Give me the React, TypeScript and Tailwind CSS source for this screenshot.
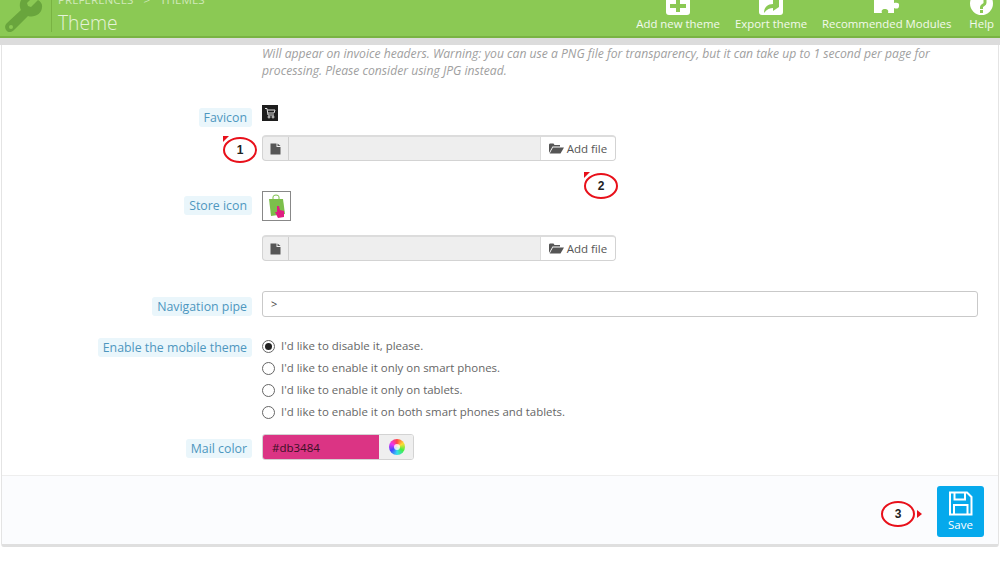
import React from "react";

function Label({ children, top = "" }: { children: React.ReactNode; top?: string }) {
  return (
    <div className={`w-[250px] shrink-0 flex justify-end ${top}`}>
      <span className="bg-[#eaf6fb] rounded-[3px] px-[5px] h-[19px] leading-[19px] text-[12.35px] text-[#4e97bf] whitespace-nowrap">{children}</span>
    </div>
  );
}

function FileIcon() {
  return (
    <svg width="11" height="12" viewBox="0 0 11 12"><path d="M0.5 0.5H6.5V4H10.5V11.5H0.5Z" fill="#555" /><path d="M7.5 0.5L10.5 3H7.5Z" fill="#555" /></svg>
  );
}

function FolderIcon() {
  return (
    <svg width="15" height="11" viewBox="0 0 15 11"><path d="M0 10V1.5L0.8 0.5H4.5L5.5 2H11V3.5H3.5L0 10Z" fill="#555" /><path d="M3.9 4.5H15L11.5 10.5H0.7Z" fill="#555" /></svg>
  );
}

function FileInput() {
  return (
    <div className="flex w-[354px] h-[26px] rounded-[4px] border border-[#d3d3d3] border-t-2 border-t-[#dcdcdc] bg-[#eeeeee] overflow-hidden">
      <div className="w-[26px] shrink-0 flex items-center justify-center border-r border-[#cfcfcf]"><FileIcon /></div>
      <div className="flex-1" />
      <div className="w-[75px] shrink-0 bg-white border-l border-[#dcdcdc] flex items-center justify-center gap-[3px] text-[11.5px] text-[#555]">
        <FolderIcon />
        <span>Add file</span>
      </div>
    </div>
  );
}

function Radio({ checked, children }: { checked?: boolean; children: React.ReactNode }) {
  return (
    <div className="h-[22px] flex items-center">
      <span className="w-[13px] h-[13px] rounded-full border border-[#666] bg-white flex items-center justify-center shrink-0">
        {checked && <span className="w-[7px] h-[7px] rounded-full bg-[#222]" />}
      </span>
      <span className="ml-[6px] text-[11.45px] text-[#666]">{children}</span>
    </div>
  );
}

function Callout({ n, cls, arrow }: { n: string; cls: string; arrow?: boolean }) {
  return (
    <div className={`absolute w-[34px] h-[26px] rounded-[50%] border-2 border-[#e8101a] bg-white flex items-center justify-center text-[12px] font-bold text-[#222] ${cls}`} style={{ fontFamily: "'Liberation Sans', sans-serif" }}>
      {!arrow && <span className="absolute left-[-2px] top-[-3px] w-0 h-0 border-t-[6px] border-t-[#e8101a] border-r-[6px] border-r-transparent" />}
      {n}
      {arrow && <span className="absolute right-[-9px] top-[7px] w-0 h-0 border-y-[4px] border-y-transparent border-l-[5px] border-l-[#e8101a]" />}
    </div>
  );
}

function HeadAction({ label, icon, cls = "" }: { label: string; icon: React.ReactNode; cls?: string }) {
  return (
    <div className={`flex flex-col items-center ${cls}`}>
      <div className="h-[15px] flex items-end overflow-hidden">{icon}</div>
      <span className="text-[11.4px] leading-[16px] mt-[1px] text-white/90 whitespace-nowrap">{label}</span>
    </div>
  );
}

export default function App() {
  return (
    <div className="relative w-[1000px] h-[563px] overflow-hidden bg-white" style={{ fontFamily: "'Open Sans', sans-serif" }}>
      <header className="h-[38px] bg-[#8bc954] border-b-2 border-[#79b343] flex items-stretch overflow-hidden">
        <div className="w-[52px] shrink-0 border-r border-[#79b343] h-[32px] relative overflow-hidden">
          <svg className="absolute left-[4px] top-[-6px]" width="40" height="40" viewBox="0 0 40 40">
            <path d="M34 6 L27 13 L24 12 L23 9 L30 2 C24 0 17 3 16 9 C15.500 12 16 14 17 16 L3 29 C0 32 1 35 3 37 C5 39 8 38 10 36 L24 22 C30 24 38 20 38 13 C38.500 10 37 8 34 6 Z" fill="#69a53d" />
            <circle cx="7" cy="33" r="2" fill="#8bc954" />
          </svg>
        </div>
        <div className="ml-[6px] w-[300px] flex flex-col">
          <div className="h-[12px] mt-[-8px] text-[11.6px] leading-[15px] text-white/60 flex gap-[10px] whitespace-nowrap">
            <span>PREFERENCES</span><span>&gt;</span><span>THEMES</span>
          </div>
          <div className="text-[19.3px] leading-[26px] mt-[6px] font-light text-[#e6f3d8]">Theme</div>
        </div>
        <nav className="ml-auto mr-[6px] flex gap-[15px] items-start">
          <HeadAction label="Add new theme" icon={
            <svg width="24" height="15" viewBox="0 0 24 15"><path d="M0 0H24V12Q24 15 21 15H3Q0 15 0 12Z" fill="#fff" /><path d="M10 0H14V4H20V8H14V12H10V8H4V4H10Z" fill="#8bc954" /></svg>} />
          <HeadAction label="Export theme" icon={
            <svg width="24" height="15" viewBox="0 0 24 15"><path d="M0 0H24V12Q24 15 21 15H3Q0 15 0 12Z" fill="#fff" /><path d="M5 13C5 7 9 4 14 4V0H20V7L14 11V8C11 8 8 9 5 13Z" fill="#8bc954" /></svg>} />
          <HeadAction label="Recommended Modules" icon={
            <svg width="26" height="15" viewBox="0 0 26 15"><path d="M0 0H20V3C23 2 26 3 25 6C25 9 22 9 20 8V13H14C15 10 13 9 11 9C8 9 7 11 8 13H0Z" fill="#fff" /></svg>} />
          <HeadAction cls="ml-[3px]" label="Help" icon={
            <svg width="23" height="15" viewBox="0 0 23 15"><circle cx="11.500" cy="3.500" r="11.500" fill="#fff" /><path d="M15 -1V3C15 5 12 5 11.500 7V9" fill="none" stroke="#8bc954" strokeWidth="3" /><rect x="10" y="10" width="3" height="3" fill="#8bc954" /></svg>} />
        </nav>
      </header>
      <div className="h-[7px] bg-[#dcdcdc]" />
      <main className="mx-[1px] h-[502px] border-x border-b-[3px] border-x-[#e4e4e4] border-b-[#dfdfdf] rounded-b-[3px] flex flex-col bg-white">
        <div className="pl-[260px] pr-[60px] text-[12.15px] leading-[17px] italic text-[#a0a0a0]">
          Will appear on invoice headers. Warning: you can use a PNG file for transparency, but it can take up to 1 second per page for processing. Please consider using JPG instead.
        </div>
        <section className="flex mt-[26px]">
          <Label top="mt-[3px]">Favicon</Label>
          <div className="ml-[10px]">
            <div className="w-[16px] h-[16px] bg-[#1d1d1d] flex items-center justify-center">
              <svg width="12" height="12" viewBox="0 0 12 12" fill="none" stroke="#ddd"><path d="M1 1.500H3L4 8H10M3.500 3H11L10 6H4" /><circle cx="5" cy="10" r="1" /><circle cx="9" cy="10" r="1" /></svg>
            </div>
            <div className="mt-[14px]"><FileInput /></div>
          </div>
        </section>
        <section className="flex mt-[30px]">
          <Label top="mt-[5px]">Store icon</Label>
          <div className="ml-[10px]">
            <div className="w-[29px] h-[30px] border border-[#888] flex items-center justify-center">
              <svg width="20" height="25" viewBox="0 0 20 25">
                <path d="M2 5H16L18 20L4 22Z" fill="#7cbf4b" />
                <path d="M6 7V3Q6 1 9 1Q12 1 12 3V7" fill="none" stroke="#7cbf4b" />
                <path d="M10 12H12L13 16L17 17L17 23L11 24L8 18H10Z" fill="#df1e82" />
              </svg>
            </div>
            <div className="mt-[14px]"><FileInput /></div>
          </div>
        </section>
        <section className="flex mt-[30px]">
          <Label top="mt-[6px]">Navigation pipe</Label>
          <div className="ml-[10px] w-[716px] h-[26px] rounded-[3px] border border-[#c9c9c9] px-[8px] text-[11px] leading-[24px] text-[#444]">&gt;</div>
        </section>
        <section className="flex mt-[18px]">
          <Label top="mt-[3px]">Enable the mobile theme</Label>
          <div className="ml-[10px]">
            <Radio checked>I'd like to disable it, please.</Radio>
            <Radio>I'd like to enable it only on smart phones.</Radio>
            <Radio>I'd like to enable it only on tablets.</Radio>
            <Radio>I'd like to enable it on both smart phones and tablets.</Radio>
          </div>
        </section>
        <section className="flex mt-[11px]">
          <Label top="mt-[5px]">Mail color</Label>
          <div className="ml-[10px] w-[152px] h-[26px] flex rounded-[3px] border border-[#d3d3d3] overflow-hidden">
            <div className="w-[116px] bg-[#db3484] px-[9px] text-[11.5px] leading-[25px] text-[#3a1024]">#db3484</div>
            <div className="flex-1 bg-[#efefef] flex items-center justify-center pl-[1px]">
              <span className="w-[16px] h-[16px] rounded-full bg-[conic-gradient(#f44,#fd3,#4e4,#3de,#44f,#e3e,#f44)] flex items-center justify-center">
                <span className="w-[6px] h-[6px] rounded-full bg-white/80" />
              </span>
            </div>
          </div>
        </section>
        <footer className="mt-[15px] flex-1 border-t border-[#eeeeee] bg-[#fbfcfe] flex justify-end pr-[14px] pt-[10px]">
          <div className="w-[47px] h-[51px] rounded-[3px] bg-[#05a9ec] flex flex-col items-center pt-[5px] text-white">
            <svg width="25" height="25" viewBox="0 0 25 25" fill="none" stroke="#fff" strokeWidth="2"><path d="M2 1.500H19L23.500 6V23.500H2Z" /><path d="M6.500 1.500V8.500H17V1.500" /><path d="M6 23.500V14H19.500V23.500" /></svg>
            <span className="text-[11.5px] leading-[14px] mt-[2px]">Save</span>
          </div>
        </footer>
      </main>
      <Callout n="1" cls="left-[223px] top-[137px]" />
      <Callout n="2" cls="left-[584px] top-[173px]" />
      <Callout n="3" cls="left-[881px] top-[501px]" arrow />
    </div>
  );
}
